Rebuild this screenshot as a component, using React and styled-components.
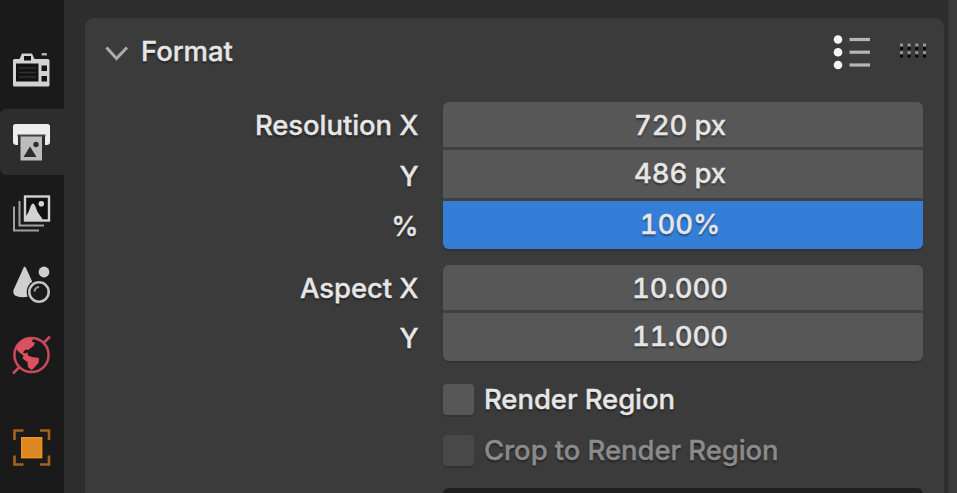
import React from 'react';
import styled, { createGlobalStyle } from 'styled-components';

const GlobalStyle = createGlobalStyle`
  * {
    box-sizing: border-box;
  }

  body {
    margin: 0;
    overflow: hidden;
    background: #2d2d2d;
    font-family: Inter, 'Liberation Sans', sans-serif;
  }
`;

const Editor = styled.div`
  display: flex;
  width: 957px;
  height: 493px;
  overflow: hidden;
  background: #2d2d2d;
  color: #e6e6e6;
  font-size: 27.5px;
  font-weight: 500;
  letter-spacing: -0.08px;
  -webkit-text-stroke: 0.35px currentColor;
  text-shadow: 0 2px 2px rgba(0, 0, 0, 0.45);
`;

const TabBar = styled.nav`
  display: flex;
  flex-direction: column;
  flex: none;
  width: 64px;
  background: #1a1a1a;
`;

const TabGroup = styled.div`
  display: flex;
  flex-direction: column;
  flex: none;
  height: ${(props) => props.$height}px;
  padding-top: ${(props) => props.$top || 0}px;
  border-bottom: 2px solid #161616;
`;

const Tab = styled.button`
  display: flex;
  align-items: center;
  flex: none;
  height: ${(props) => props.$height}px;
  padding: 0 0 0 11px;
  border: none;
  border-radius: 6px 0 0 6px;
  background: ${(props) => (props.$active ? '#2d2d2d' : 'transparent')};

  svg {
    display: block;
  }
`;

const Content = styled.main`
  flex: 1;
  padding: 18px 0 0 21px;
`;

const Panel = styled.section`
  width: 859px;
  height: 500px;
  border-radius: 9px 9px 0 0;
  background: #3b3b3b;
`;

const PanelHeader = styled.header`
  display: flex;
  align-items: center;
  height: 67px;
  padding: 0 16px 0 20px;
`;

const Title = styled.h2`
  flex: 1;
  margin: 0 0 1px 11px;
  font-size: 27.5px;
  font-weight: 500;
`;

const HeaderIcons = styled.div`
  display: flex;
  align-items: center;
  gap: 28px;
`;

const Form = styled.div`
  display: flex;
  flex-direction: column;
  padding: 17px 21px 0 0;
`;

const FieldGroup = styled.div`
  display: flex;
  gap: 24.5px;
  height: ${(props) => props.$height}px;
`;

const Labels = styled.div`
  display: flex;
  flex-direction: column;
  align-items: flex-end;
  width: 333.5px;
`;

const Label = styled.label`
  height: 50.5px;
  line-height: 47px;
`;

const Fields = styled.div`
  display: flex;
  flex-direction: column;
  align-self: flex-start;
  gap: 3px;
  width: 480px;
  border-radius: 6px;
  overflow: hidden;
  background: #404040;
  box-shadow: 0 2px 1px #333;
`;

const Field = styled.div`
  height: ${(props) => props.$height || 48}px;
  padding-right: 6px;
  background: ${(props) => (props.$filled ? '#347ed8' : '#575757')};
  line-height: 46px;
  text-align: center;
  font-feature-settings: 'tnum';
`;

const Checks = styled.div`
  display: flex;
  flex-direction: column;
  gap: 20px;
  padding-left: 358px;
`;

const Check = styled.label`
  display: flex;
  align-items: center;
  gap: 10.5px;
  height: 31px;
  line-height: 31px;
  color: ${(props) => (props.$disabled ? '#8b8b8b' : '#e6e6e6')};
`;

const Box = styled.span`
  width: 30.5px;
  height: 31px;
  border-radius: 4px;
  background: ${(props) => (props.$disabled ? '#484848' : '#575757')};
  box-shadow: 0 2px 1px #343434;
`;

const NextField = styled.div`
  height: 40px;
  margin: 22px 0 0 358px;
  border-radius: 6px;
  background: #1f1f1f;
`;

const NextArea = styled.aside`
  flex: none;
  width: 9px;
  border-left: 1px solid #343434;
  background: #3b3b3b;
`;

const Icon = ({ width = 40, height = 40, children }) => (
  <svg width={width} height={height} viewBox={`0 0 ${width} ${height}`} fill="none">
    {children}
  </svg>
);

const RenderIcon = () => (
  <Icon>
    <path d="M8.500 8l2.500-5.500h10L23.500 8H37q1.500 0 1.500 1.500v24.500q0 1.500-1.500 1.500H3.500q-1.500 0-1.500-1.500V9.500Q2 8 3.500 8z" fill="#d2d2d2" />
    <path d="M13 5h7v4.500h-7zM5 12.500h22.500v18H5zM30.500 14.500H36V20h-5.500zM30.500 25H36v5.500h-5.500z" fill="#121212" />
    <path d="M8 17h17M8 21.500h17M8 26h17" stroke="#303030" strokeWidth="1.500" />
    <rect x="30.500" y="2" width="5.500" height="2.600" rx="1.200" fill="#b0b0b0" />
  </Icon>
);

const OutputIcon = () => (
  <Icon>
    <path d="M4.500 2h32Q39 2 39 4.500V20q0 3-3.500 3H34V14H7v9H5.500Q2 23 2 20V4.500Q2 2 4.500 2z" fill="#eeeeee" />
    <path d="M6.500 12.500h28v2h-28z" fill="#454545" />
    <path d="M9.500 14.500H31V38.500H9.500z" fill="#bdbdbd" />
    <path d="M12.500 35l6.500-10.500L25.500 35z" fill="#2d2d2d" />
    <circle cx="25" cy="22.500" r="2.700" fill="#2d2d2d" />
  </Icon>
);

const ViewLayerIcon = () => (
  <Icon>
    <path d="M8.500 8v24.500h24.500M3 13.500v24h25" stroke="#a0a0a0" strokeWidth="2" />
    <rect x="14" y="3.500" width="24" height="24" fill="#111" stroke="#d2d2d2" strokeWidth="2.400" />
    <path d="M15 27V23q3-4 4-8 1.500-4.500 3-4.500t3 4.500q1.500 5 4 7.500 2 2 2.500 4.500z" fill="#d2d2d2" />
    <circle cx="30.300" cy="10.800" r="2.800" fill="#d2d2d2" />
  </Icon>
);

const SceneIcon = () => (
  <Icon>
    <path d="M13.500 1.500Q14.500 1.500 15.500 4l6.500 14.500V30Q13 34 5 31 1.500 29.500 2.500 25L12 4q.7-2.500 1.500-2.500z" fill="#cfcfcf" />
    <circle cx="28" cy="27" r="12.300" fill="#1a1a1a" />
    <circle cx="28" cy="27" r="9.700" fill="#1a1a1a" stroke="#c4c4c4" strokeWidth="2.500" />
    <path d="M23.500 26.500q.3-4 4.500-4.500" stroke="#999" strokeWidth="2" />
    <circle cx="33" cy="7" r="5.400" fill="#cfcfcf" />
  </Icon>
);

const WorldIcon = () => (
  <Icon>
    <circle cx="20.500" cy="20" r="17.100" stroke="#cb4a59" strokeWidth="2.500" />
    <path d="M32 8.500l7-7M9 31.500l-7 7" stroke="#cb4a59" strokeWidth="2.600" />
    <path d="M5 13Q9 5.500 15 3.500l7-.5-1 4 3 .5-1.500 3.500-5.500 4-2.500-.5-2.500 3 1.500 1 3-1 .5 3 4 1.500 7 1-.5 5-5 5.500-2 1.500-3.500-3-.5-5-5-3.500 1-3-4-3-2.500-2.500z" fill="#dc5060" />
  </Icon>
);

const ObjectIcon = () => (
  <Icon>
    <path d="M12.500 3.500h-9V13M29 3.500h9V13M3.500 28.500v9h9M38 28.500v9h-9" stroke="#a5631f" strokeWidth="2.600" />
    <rect x="10.800" y="10.800" width="19.800" height="19.800" fill="#db8722" stroke="#f39218" strokeWidth="1.600" />
  </Icon>
);

const Chevron = () => (
  <Icon width={25} height={20}>
    <path d="M1.500 5.500L11.500 16.500 22 5.500" stroke="#ababab" strokeWidth="3" />
  </Icon>
);

const PresetIcon = () => (
  <Icon width={38} height={36}>
    {[5.5, 18.2, 31].map((y) => (
      <g key={y}>
        <circle cx="5" cy={y} r="4.300" fill="#f4f4f4" />
        <path d={`M16.500 ${y}h20.500`} stroke="#b5b5b5" strokeWidth="3.200" />
      </g>
    ))}
  </Icon>
);

const GripIcon = () => (
  <Icon width={29} height={18}>
    {[1, 8.6, 16.3, 24].map((x) => (
      <g key={x}>
        <path d={`M${x} 2h3M${x} 9.700h3`} stroke="#969696" strokeWidth="2.800" />
        <path d={`M${x} 5.500h3M${x} 13.200h3`} stroke="#080808" strokeWidth="2.800" />
      </g>
    ))}
  </Icon>
);

function App() {
  return (
    <>
      <GlobalStyle />
      <Editor>
        <TabBar>
          <TabGroup $height={17} />
          <TabGroup $height={376} $top={16.5}>
            <Tab $height={75.5}>
              <RenderIcon />
            </Tab>
            <Tab $active $height={66}>
              <OutputIcon />
            </Tab>
            <Tab $height={76}>
              <ViewLayerIcon />
            </Tab>
            <Tab $height={68}>
              <SceneIcon />
            </Tab>
            <Tab $height={72}>
              <WorldIcon />
            </Tab>
          </TabGroup>
          <Tab $height={108}>
            <ObjectIcon />
          </Tab>
        </TabBar>

        <Content>
          <Panel>
            <PanelHeader>
              <Chevron />
              <Title>Format</Title>
              <HeaderIcons>
                <PresetIcon />
                <GripIcon />
              </HeaderIcons>
            </PanelHeader>

            <Form>
              <FieldGroup $height={162.5}>
                <Labels>
                  <Label>Resolution X</Label>
                  <Label>Y</Label>
                  <Label>%</Label>
                </Labels>
                <Fields>
                  <Field $height={45}>720 px</Field>
                  <Field>486 px</Field>
                  <Field $filled>100%</Field>
                </Fields>
              </FieldGroup>

              <FieldGroup $height={119.5}>
                <Labels>
                  <Label>Aspect X</Label>
                  <Label>Y</Label>
                </Labels>
                <Fields>
                  <Field $height={45.5}>10.000</Field>
                  <Field>11.000</Field>
                </Fields>
              </FieldGroup>

              <Checks>
                <Check>
                  <Box />
                  Render Region
                </Check>
                <Check $disabled>
                  <Box $disabled />
                  Crop to Render Region
                </Check>
              </Checks>
              <NextField />
            </Form>
          </Panel>
        </Content>
        <NextArea />
      </Editor>
    </>
  );
}

export default App;
